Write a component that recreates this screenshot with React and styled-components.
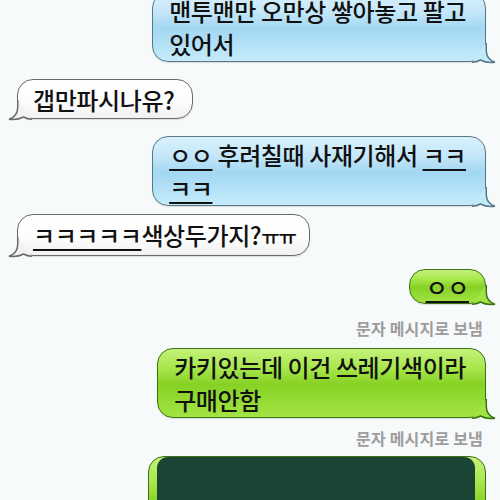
import React from "react";
import styled, { createGlobalStyle } from "styled-components";

const GlobalStyle = createGlobalStyle`
  html, body {
    margin: 0;
    padding: 0;
    background: #f7fafb;
  }
  body {
    font-family: "Noto Sans CJK KR", "Noto Sans", sans-serif;
  }
`;

const palette = {
  blue: {
    bg: "linear-gradient(180deg, #d9f0fc 0%, #c4e7f9 28%, #a3d7f2 52%, #b0dff6 72%, #c6ebfa 100%)",
    border: "#587886",
    tail: "#c4e9fa",
  },
  green: {
    bg: "linear-gradient(180deg, #c4f17a 0%, #a8e74c 28%, #87d124 52%, #92da33 72%, #a3e444 100%)",
    border: "#3a7415",
    tail: "#a1e342",
  },
  white: {
    bg: "linear-gradient(180deg, #ffffff 0%, #fcfcfc 60%, #f1f1f1 100%)",
    border: "#6a6a6a",
    tail: "#f2f2f2",
  },
};

const Thread = styled.div`
  display: flex;
  flex-direction: column;
  height: 500px;
  overflow: hidden;
  padding: 0 14px 0 17px;
  box-sizing: border-box;
  background: #f7fafb;
`;

const Row = styled.div`
  display: flex;
  justify-content: ${(p) => (p.$out ? "flex-end" : "flex-start")};
  margin-top: ${(p) => p.$mt}px;
`;

const Bubble = styled.div`
  position: relative;
  padding: ${(p) => p.$pad};
  border: 1.5px solid ${(p) => palette[p.$tone].border};
  border-radius: 16px;
  background: ${(p) => palette[p.$tone].bg};
  box-shadow: 0 1px 1px rgba(0, 0, 0, 0.12);
  color: #111;
  font-size: 24px;
  font-weight: 500;
  line-height: 33px;
  letter-spacing: -0.4px;
  white-space: nowrap;
`;

const U = styled.span`
  text-decoration: underline;
  text-decoration-thickness: 2px;
  text-underline-offset: 4px;
`;

const Small = styled.span`
  font-size: 20px;
  letter-spacing: -1px;
`;

const TailSvg = styled.svg`
  position: absolute;
  bottom: -1.5px;
  width: 24px;
  height: 22px;
  overflow: visible;
  ${(p) =>
    p.$out
      ? "right: -10.5px;"
      : "left: -10.5px; transform: scaleX(-1);"}
`;

const TAIL =
  "M14.25 2 L14.25 9 C14.25 15 17.5 19.5 23 21.2 C18 21.8 12 21 8.5 19 C6 20.5 3 21.2 0 21.25";

const Tail = ({ tone, out }) => (
  <TailSvg $out={out} viewBox="0 0 24 22">
    <path d={`${TAIL} Z`} fill={palette[tone].tail} />
    <path d={TAIL} fill="none" stroke={palette[tone].border} strokeWidth="1.5" />
  </TailSvg>
);

const Msg = ({ tone, out, mt, pad, children }) => (
  <Row $out={out} $mt={mt}>
    <Bubble $tone={tone} $pad={pad}>
      {children}
      <Tail tone={tone} out={out} />
    </Bubble>
  </Row>
);

const Meta = styled.div`
  margin-top: ${(p) => p.$mt}px;
  padding-right: 3px;
  text-align: right;
  font-size: 16px;
  line-height: 20px;
  font-weight: 700;
  color: #9d9d9d;
  letter-spacing: 0.2px;
`;

const Photo = styled.div`
  width: 318px;
  height: 90px;
  border-radius: 11px 11px 0 0;
  background: #1a4434;
`;

const OUT_PAD = "1px 19px 1px 16px";
const IN_PAD = "3px 17px 2px 15px";

export default function App() {
  return (
    <>
      <GlobalStyle />
      <Thread>
        <Msg tone="blue" out mt={-8} pad={OUT_PAD}>
          맨투맨만 오만상 쌓아놓고 팔고
          <br />
          있어서
        </Msg>
        <Msg tone="white" mt={17} pad={IN_PAD}>
          갭만파시나유?
        </Msg>
        <Msg tone="blue" out mt={17} pad={OUT_PAD}>
          <U>ㅇㅇ</U> 후려칠때 사재기해서 <U>ㅋㅋ</U>
          <br />
          <U>ㅋㅋ</U>
        </Msg>
        <Msg tone="white" mt={8} pad="3px 13px 2px 15px">
          <U>ㅋㅋㅋㅋㅋ</U>색상두가지?<Small>ㅠㅠ</Small>
        </Msg>
        <Msg tone="green" out mt={13} pad="0 16px">
          <U>ㅇㅇ</U>
        </Msg>
        <Meta $mt={14}>문자 메시지로 보냄</Meta>
        <Msg tone="green" out mt={10} pad={OUT_PAD}>
          카키있는데 이건 쓰레기색이라
          <br />
          구매안함
        </Msg>
        <Meta $mt={10}>문자 메시지로 보냄</Meta>
        <Msg tone="green" out mt={8} pad="0 10px 0 8px">
          <Photo />
        </Msg>
      </Thread>
    </>
  );
}
